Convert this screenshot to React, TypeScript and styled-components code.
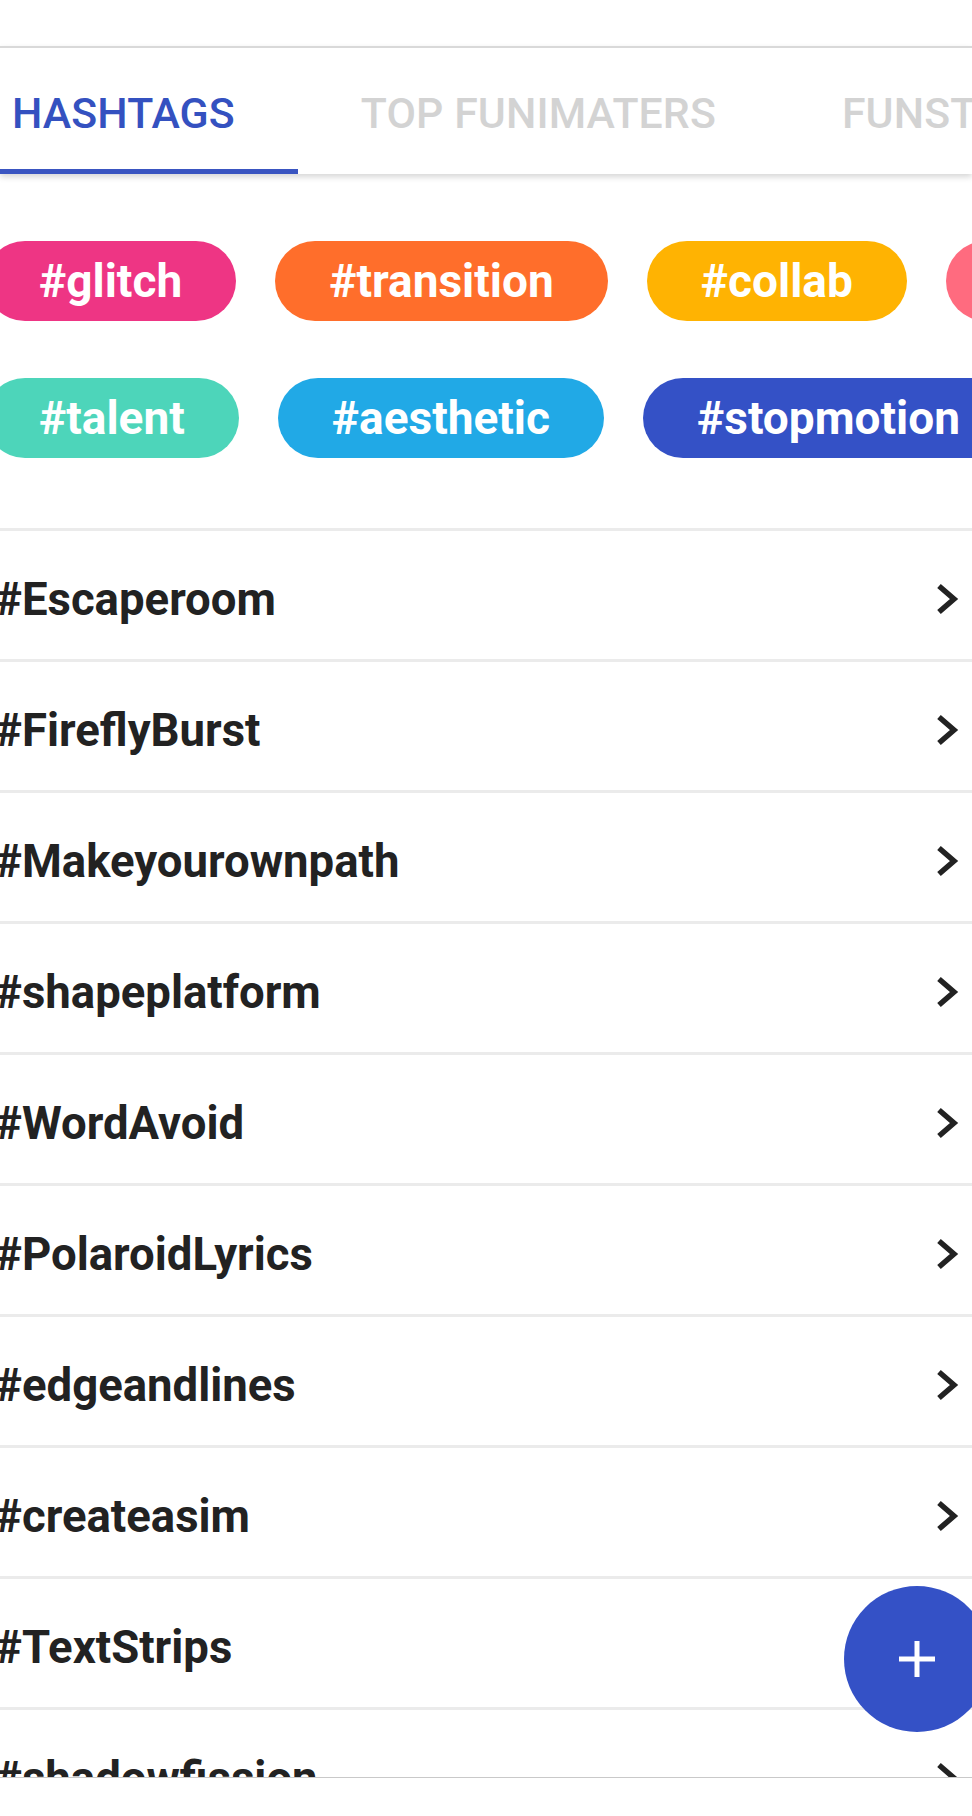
import React from 'react';
import styled, { createGlobalStyle } from 'styled-components';

const GlobalStyle = createGlobalStyle`
  html, body {
    margin: 0;
    padding: 0;
    background: #ffffff;
  }
  body {
    font-family: Roboto, "Noto Sans", "Liberation Sans", sans-serif;
  }
`;

const Screen = styled.div`
  position: relative;
  width: 972px;
  height: 1816px;
  overflow: hidden;
  display: flex;
  flex-direction: column;
  background: #ffffff;
`;

const StatusSpace = styled.div`
  height: 46px;
  flex-shrink: 0;
`;

const TabBar = styled.div`
  position: relative;
  z-index: 2;
  height: 126px;
  flex-shrink: 0;
  border-top: 2px solid #d9d9d9;
  background: #ffffff;
  box-shadow: 0 3px 6px rgba(0, 0, 0, 0.16);
  overflow: hidden;
`;

const TabStrip = styled.div`
  display: flex;
  height: 100%;
  margin-left: -51px;
`;

const Tab = styled.div<{ active?: boolean }>`
  box-sizing: border-box;
  flex-shrink: 0;
  display: flex;
  align-items: center;
  height: 100%;
  padding: 9px 63px 0;
  font-size: 42.8px;
  font-weight: 500;
  letter-spacing: 0.1px;
  text-transform: uppercase;
  white-space: nowrap;
  color: ${({ active }) => (active ? '#3451c0' : '#d3d3d3')};
  border-bottom: 5px solid ${({ active }) => (active ? '#3a55c1' : 'transparent')};
`;

const ChipArea = styled.div`
  display: flex;
  flex-direction: column;
  gap: 57px;
  padding: 67px 0 70px;
  flex-shrink: 0;
`;

const ChipRow = styled.div`
  display: flex;
  gap: 39px;
  margin-left: -15px;
`;

const Chip = styled.div<{ color: string }>`
  flex-shrink: 0;
  display: flex;
  align-items: center;
  height: 80px;
  padding: 0 54px;
  border-radius: 40px;
  background: ${({ color }) => color};
  color: #ffffff;
  font-size: 46px;
  font-weight: 700;
  white-space: nowrap;
`;

const List = styled.div`
  flex: 1;
  overflow: hidden;
  border-bottom: 1px solid #c9c9c9;
`;

const Row = styled.div`
  box-sizing: border-box;
  height: 131px;
  display: flex;
  align-items: center;
  justify-content: space-between;
  border-top: 3px solid #ebebeb;
  padding: 8px 13px 0 0;
`;

const RowLabel = styled.span`
  margin-left: -5px;
  font-size: 45.5px;
  font-weight: 700;
  color: #222222;
  white-space: nowrap;
`;

const Chevron = styled.svg`
  width: 24px;
  height: 34px;
  flex-shrink: 0;
`;

const BottomSpace = styled.div`
  height: 38px;
  flex-shrink: 0;
`;

const Fab = styled.button`
  position: absolute;
  top: 1586px;
  right: -18px;
  width: 146px;
  height: 146px;
  border: none;
  border-radius: 50%;
  background: #3451c6;
  display: flex;
  align-items: center;
  justify-content: center;
  padding: 0;
`;

const tabs = ['Hashtags', 'Top Funimaters', 'Funstars'];

const chipRows = [
  [
    { tag: '#glitch', color: '#ee3584' },
    { tag: '#transition', color: '#ff6e2b' },
    { tag: '#collab', color: '#ffb302' },
    { tag: '#vlog', color: '#ff6b7f' },
  ],
  [
    { tag: '#talent', color: '#4dd5ba' },
    { tag: '#aesthetic', color: '#21a9e6' },
    { tag: '#stopmotion', color: '#3451c6' },
  ],
];

const hashtags = [
  '#Escaperoom',
  '#FireflyBurst',
  '#Makeyourownpath',
  '#shapeplatform',
  '#WordAvoid',
  '#PolaroidLyrics',
  '#edgeandlines',
  '#createasim',
  '#TextStrips',
  '#shadowfission',
];

const App = () => {
  return (
    <>
      <GlobalStyle />
      <Screen>
        <StatusSpace />
        <TabBar>
          <TabStrip>
            {tabs.map((t, i) => (
              <Tab key={t} active={i === 0}>{t}</Tab>
            ))}
          </TabStrip>
        </TabBar>

        <ChipArea>
          {chipRows.map((row, i) => (
            <ChipRow key={i}>
              {row.map((c) => (
                <Chip key={c.tag} color={c.color}>{c.tag}</Chip>
              ))}
            </ChipRow>
          ))}
        </ChipArea>

        <List>
          {hashtags.map((h) => (
            <Row key={h}>
              <RowLabel>{h}</RowLabel>
              <Chevron viewBox="0 0 24 34">
                <path d="M4 4 L19 17 L4 30" fill="none" stroke="#222" strokeWidth="5.5" />
              </Chevron>
            </Row>
          ))}
        </List>
        <BottomSpace />

        <Fab aria-label="add">
          <svg width="40" height="40" viewBox="0 0 40 40">
            <path d="M20 2 V38 M2 20 H38" stroke="#fff" strokeWidth="5" />
          </svg>
        </Fab>
      </Screen>
    </>
  );
};

export default App;
